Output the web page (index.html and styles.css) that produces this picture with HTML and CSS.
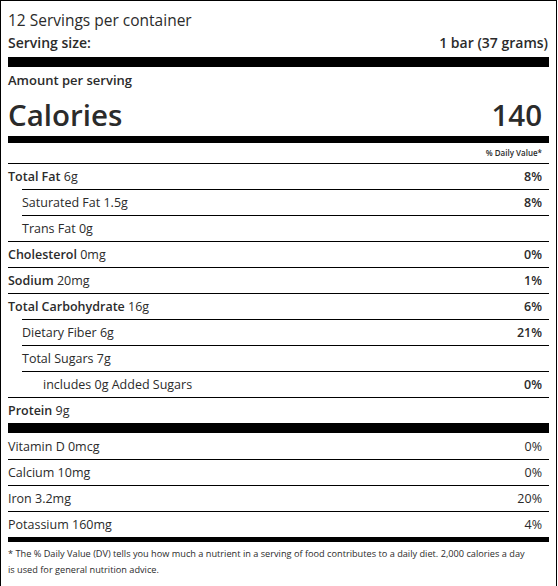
FILE: index.html
```html
<!DOCTYPE html>
<html lang="en">
<head>
<meta charset="utf-8">
<title>Nutrition Facts</title>
<link rel="stylesheet" href="styles.css">
</head>
<body>
<section class="label">
  <div class="servings">12 Servings per container</div>
  <div class="serving-size"><span>Serving size:</span><span>1 bar (37 grams)</span></div>
  <div class="bar bar-thick"></div>
  <div class="amount">Amount per serving</div>
  <div class="calories"><span>Calories</span><span class="cal-value">140</span></div>
  <div class="bar bar-mid"></div>
  <div class="dv-head">% Daily Value*</div>

  <div class="row"><span><b>Total Fat</b> 6g</span><b class="pct">8%</b></div>
  <div class="row sub"><span>Saturated Fat 1.5g</span><b class="pct">8%</b></div>
  <div class="row sub"><span>Trans Fat 0g</span></div>
  <div class="row"><span><b>Cholesterol</b> 0mg</span><b class="pct">0%</b></div>
  <div class="row"><span><b>Sodium</b> 20mg</span><b class="pct">1%</b></div>
  <div class="row"><span><b>Total Carbohydrate</b> 16g</span><b class="pct">6%</b></div>
  <div class="row sub"><span>Dietary Fiber 6g</span><b class="pct">21%</b></div>
  <div class="row sub"><span>Total Sugars 7g</span></div>
  <div class="row sub subsub"><span>includes 0g Added Sugars</span><b class="pct">0%</b></div>
  <div class="row"><span><b>Protein</b> 9g</span></div>
  <div class="bar bar-thick"></div>

  <div class="row first"><span>Vitamin D 0mcg</span><span class="pct">0%</span></div>
  <div class="row"><span>Calcium 10mg</span><span class="pct">0%</span></div>
  <div class="row"><span>Iron 3.2mg</span><span class="pct">20%</span></div>
  <div class="row"><span>Potassium 160mg</span><span class="pct">4%</span></div>
  <div class="bar bar-mid2"></div>

  <p class="footnote">* The % Daily Value (DV) tells you how much a nutrient in a serving of food contributes to a daily diet. 2,000 calories a day<br>is used for general nutrition advice.</p>
</section>
</body>
</html>
```
FILE: styles.css
```css
html, body {
  margin: 0;
  padding: 0;
  background: #fff;
}

.label {
  width: 541px;
  border: 1px solid #000;
  padding: 7px 7px 14px 7px;
  font-family: "Open Sans", "Liberation Sans", sans-serif;
  color: #2b2b2b;
}

.servings {
  font-size: 15.5px;
  line-height: 24px;
}

.serving-size {
  display: flex;
  justify-content: space-between;
  font-size: 14px;
  font-weight: 600;
  line-height: 22px;
  margin-bottom: 3px;
  padding-right: 1px;
}

.bar {
  background: #000;
}

.bar-thick {
  height: 10px;
}

.bar-mid {
  height: 7px;
}

.bar-mid2 {
  height: 5px;
}

.amount {
  font-size: 13px;
  font-weight: 600;
  line-height: 20px;
  margin-top: 3px;
}

.calories {
  display: flex;
  justify-content: space-between;
  align-items: center;
  font-size: 29.5px;
  font-weight: 600;
  line-height: 42px;
  padding-top: 4px;
}

.cal-value {
  padding-right: 7px;
}

.dv-head {
  font-size: 8px;
  font-weight: 600;
  line-height: 20px;
  text-align: right;
  padding-right: 7px;
}

.row {
  display: flex;
  justify-content: space-between;
  align-items: center;
  height: 25px;
  border-top: 1px solid #000;
  font-size: 12.5px;
}

.row.first {
  border-top: none;
  height: 26px;
}

.row b {
  font-weight: 600;
}

.row.sub {
  margin-left: 14px;
}

.row.subsub > span:first-child {
  padding-left: 21px;
}

.pct {
  padding-right: 7px;
}

.footnote {
  margin: 0;
  padding-top: 4px;
  font-size: 9.2px;
  line-height: 16px;
}
```
